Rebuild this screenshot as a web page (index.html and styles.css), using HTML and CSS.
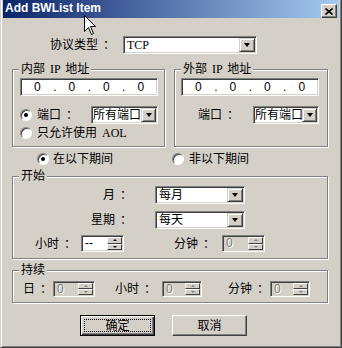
FILE: index.html
```html
<!DOCTYPE html>
<html lang="zh-CN">
<head>
    <meta charset="UTF-8">
    <meta name="viewport" content="width=device-width, initial-scale=1.0">
    <title>Add BWList Item</title>
    <link rel="stylesheet" href="styles.css">
</head>
<body>
<div class="window">
    <div class="titlebar">
        <span class="title">Add BWList Item</span>
        <span class="close">
            <svg width="8" height="7" viewBox="0 0 8 7"><path d="M0.5 0.5L7.5 6.5M7.5 0.5L0.5 6.5" stroke="#000" stroke-width="1.6"/></svg>
        </span>
    </div>

    <div class="content">
        <!-- protocol -->
        <div class="proto-row">
            <span class="proto-label">协议类型 ：</span>
            <div class="combo w-proto">
                <span class="combo-text">TCP</span>
                <span class="arrow-btn"><i class="tri"></i></span>
            </div>
        </div>

        <!-- inner / outer address -->
        <div class="groups">
            <div class="group group-in">
                <span class="caption">内部 IP 地址</span>
                <div class="ipbox">
                    <span class="octet">0</span><span class="dot">.</span>
                    <span class="octet">0</span><span class="dot">.</span>
                    <span class="octet">0</span><span class="dot">.</span>
                    <span class="octet">0</span>
                </div>
                <div class="port-row">
                    <label class="opt"><span class="radio checked"></span>端口 ：</label>
                    <div class="combo w-port">
                        <span class="combo-text tight">所有端口</span>
                        <span class="arrow-btn narrow"><i class="tri"></i></span>
                    </div>
                </div>
                <label class="opt aol-row"><span class="radio"></span>只允许使用 AOL</label>
            </div>

            <div class="group group-out">
                <span class="caption">外部 IP 地址</span>
                <div class="ipbox">
                    <span class="octet">0</span><span class="dot">.</span>
                    <span class="octet">0</span><span class="dot">.</span>
                    <span class="octet">0</span><span class="dot">.</span>
                    <span class="octet">0</span>
                </div>
                <div class="port-row">
                    <span class="port-label">端口 ：</span>
                    <div class="combo w-port2">
                        <span class="combo-text tight">所有端口</span>
                        <span class="arrow-btn narrow"><i class="tri"></i></span>
                    </div>
                </div>
            </div>
        </div>

        <!-- period -->
        <div class="period-row">
            <label class="opt period-opt"><span class="radio checked"></span>在以下期间</label>
            <label class="opt"><span class="radio"></span>非以下期间</label>
        </div>

        <!-- start -->
        <div class="group group-start">
            <span class="caption">开始</span>
            <div class="sel-row">
                <span class="sel-label">月 ：</span>
                <div class="combo w-sel">
                    <span class="combo-text">每月</span>
                    <span class="arrow-btn"><i class="tri"></i></span>
                </div>
            </div>
            <div class="sel-row second">
                <span class="sel-label">星期 ：</span>
                <div class="combo w-sel">
                    <span class="combo-text">每天</span>
                    <span class="arrow-btn"><i class="tri"></i></span>
                </div>
            </div>
            <div class="time-row">
                <span class="time-label">小时 ：</span>
                <div class="spin">
                    <span class="spin-text">--</span>
                    <span class="spin-btns"><span class="sb"><i class="up"></i></span><span class="sb"><i class="dn"></i></span></span>
                </div>
                <span class="time-label min-label">分钟 ：</span>
                <div class="spin disabled">
                    <span class="spin-text">0</span>
                    <span class="spin-btns"><span class="sb"><i class="up"></i></span><span class="sb"><i class="dn"></i></span></span>
                </div>
            </div>
        </div>

        <!-- duration -->
        <div class="group group-dur">
            <span class="caption">持续</span>
            <div class="dur-row">
                <span class="dur-label day">日 ：</span>
                <div class="spin disabled w-day">
                    <span class="spin-text">0</span>
                    <span class="spin-btns"><span class="sb"><i class="up"></i></span><span class="sb"><i class="dn"></i></span></span>
                </div>
                <span class="dur-label hour">小时 ：</span>
                <div class="spin disabled w-dur">
                    <span class="spin-text">0</span>
                    <span class="spin-btns"><span class="sb"><i class="up"></i></span><span class="sb"><i class="dn"></i></span></span>
                </div>
                <span class="dur-label minute">分钟 ：</span>
                <div class="spin disabled w-dur">
                    <span class="spin-text">0</span>
                    <span class="spin-btns"><span class="sb"><i class="up"></i></span><span class="sb"><i class="dn"></i></span></span>
                </div>
            </div>
        </div>

        <div class="buttons">
            <button class="btn default"><span class="focus">确定</span></button>
            <button class="btn"><span class="focus off">取消</span></button>
        </div>
    </div>

    <svg class="cursor" width="13" height="21" viewBox="0 0 13 21">
        <path d="M0.5 0.5V16.5L4.5 12.5L7.5 19.5L9.5 18.5L6.5 11.5H11.5Z" fill="#fff" stroke="#000" stroke-width="1"/>
    </svg>
</div>
</body>
</html>
```

FILE: styles.css
```css
body {
    margin: 0;
    background: #d4d0c8;
    font-family: "Liberation Serif", "Noto Sans CJK SC", serif;
    font-size: 12px;
    line-height: 14px;
    color: #000;
}
.window {
    position: relative;
    width: 342px;
    height: 348px;
    box-sizing: border-box;
    background: #d4d0c8;
    border: 1px solid;
    border-color: #d4d0c8 #404040 #404040 #d4d0c8;
    border-top: 0;
    padding: 0 2px 2px 2px;
    box-shadow: inset 1px 0 #fff, inset -1px -1px #808080;
}
.titlebar {
    height: 18px;
    display: flex;
    justify-content: space-between;
    align-items: flex-start;
    padding: 0 2px;
    background: linear-gradient(90deg, #0a246a, #a6caf0);
}
.title {
    font: bold 12px/17px "Liberation Sans", sans-serif;
    color: #fff;
}
.close {
    margin-top: 4px;
    width: 16px;
    height: 14px;
    box-sizing: border-box;
    display: flex;
    align-items: center;
    justify-content: center;
    background: #d4d0c8;
    border: 1px solid;
    border-color: #fff #404040 #404040 #fff;
    box-shadow: inset -1px -1px #808080;
}

/* generic controls */
.combo {
    height: 18px;
    box-sizing: border-box;
    display: flex;
    background: #fff;
    border: 1px solid;
    border-color: #808080 #fff #fff #808080;
    box-shadow: inset 1px 1px #404040, inset -1px -1px #d4d0c8;
    padding: 1px;
}
.combo-text {
    flex: 1;
    min-width: 0;
    padding-left: 2px;
    line-height: 14px;
    white-space: nowrap;
}
.combo-text.tight { padding-left: 0; }
.arrow-btn {
    width: 16px;
    flex: none;
    box-sizing: border-box;
    display: flex;
    align-items: center;
    justify-content: center;
    background: #d4d0c8;
    border: 1px solid;
    border-color: #d4d0c8 #404040 #404040 #d4d0c8;
    box-shadow: inset 1px 1px #fff, inset -1px -1px #808080;
}
.arrow-btn.narrow { width: 15px; }
.tri {
    width: 0;
    height: 0;
    border-left: 3.5px solid transparent;
    border-right: 3.5px solid transparent;
    border-top: 4px solid #000;
}
.radio {
    width: 12px;
    height: 12px;
    box-sizing: border-box;
    flex: none;
    position: relative;
    border-radius: 50%;
    background: #fff;
    border: 1px solid;
    border-color: #808080 #fff #fff #808080;
    box-shadow: inset 1px 1px #404040;
}
.radio.checked::after {
    content: "";
    position: absolute;
    left: 3px;
    top: 3px;
    width: 4px;
    height: 4px;
    border-radius: 50%;
    background: #000;
}
.opt {
    display: flex;
    align-items: center;
    gap: 5px;
    white-space: nowrap;
    word-spacing: 2px;
}
.group {
    position: relative;
    box-sizing: border-box;
    border: 1px solid #808080;
    box-shadow: inset 1px 1px #fff, 1px 1px #fff;
}
.caption {
    position: absolute;
    top: -8px;
    left: 6px;
    padding: 0 2px;
    background: #d4d0c8;
    white-space: nowrap;
    word-spacing: 2px;
}
.spin {
    width: 43px;
    height: 17px;
    box-sizing: border-box;
    display: flex;
    background: #fff;
    border: 1px solid;
    border-color: #808080 #fff #fff #808080;
    box-shadow: inset 1px 1px #404040, inset -1px -1px #d4d0c8;
    padding: 1px;
}
.spin.disabled {
    background: #d4d0c8;
    color: #808080;
}
.spin-text {
    flex: 1;
    padding-left: 2px;
    font-family: "Liberation Sans", sans-serif;
    line-height: 13px;
}
.spin.disabled .spin-text {
    text-shadow: 1px 1px #fff;
}
.spin-btns {
    width: 15px;
    display: flex;
    flex-direction: column;
}
.sb {
    flex: 1;
    box-sizing: border-box;
    display: flex;
    align-items: center;
    justify-content: center;
    background: #d4d0c8;
    border: 1px solid;
    border-color: #fff #404040 #404040 #fff;
}
.sb .up, .sb .dn {
    width: 0;
    height: 0;
    border-left: 2px solid transparent;
    border-right: 2px solid transparent;
}
.sb .up { border-bottom: 2px solid #000; }
.sb .dn { border-top: 2px solid #000; }
.spin.disabled .sb .up { border-bottom-color: #808080; }
.spin.disabled .sb .dn { border-top-color: #808080; }

/* protocol row */
.proto-row {
    display: flex;
    align-items: center;
    margin-top: 18px;
    padding-left: 47px;
    height: 18px;
}
.proto-label {
    width: 73px;
    word-spacing: 2px;
}
.w-proto { width: 134px; }

/* address groups */
.groups {
    display: flex;
    gap: 9px;
    margin: 15px 0 0 9px;
}
.group-in {
    width: 153px;
    height: 78px;
    padding: 8px 0 0 7px;
}
.group-out {
    width: 154px;
    height: 78px;
    padding: 8px 0 0 6px;
}
.ipbox {
    width: 138px;
    height: 18px;
    box-sizing: border-box;
    display: flex;
    background: #fff;
    border: 1px solid;
    border-color: #808080 #fff #fff #808080;
    box-shadow: inset 1px 1px #404040, inset -1px -1px #d4d0c8;
    padding: 1px;
    font-family: "Liberation Sans", sans-serif;
}
.octet {
    width: 31px;
    text-align: center;
}
.dot {
    width: 4px;
    text-align: right;
}
.port-row {
    width: 138px;
    height: 18px;
    margin-top: 10px;
    display: flex;
    align-items: center;
    justify-content: space-between;
}
.w-port { width: 67px; }
.w-port2 { width: 66px; }
.port-label {
    padding-left: 17px;
    word-spacing: 2px;
}
.aol-row {
    margin-top: 2px;
    height: 14px;
}

/* period */
.period-row {
    display: flex;
    margin-top: 5px;
    padding-left: 34px;
    height: 14px;
}
.period-opt {
    width: 135px;
    gap: 4px;
}

/* start group */
.group-start {
    width: 316px;
    height: 83px;
    margin: 10px 0 0 9px;
    padding-top: 9px;
}
.sel-row {
    display: flex;
    align-items: center;
    height: 18px;
}
.sel-row.second { margin-top: 7px; }
.sel-label {
    width: 119px;
    margin-right: 23px;
    text-align: right;
    word-spacing: 2px;
}
.w-sel { width: 90px; }
.time-row {
    display: flex;
    align-items: center;
    margin-top: 6px;
    padding-left: 22px;
}
.time-label {
    width: 46px;
    word-spacing: 2px;
}
.min-label {
    width: 48px;
    margin-left: 50px;
}

/* duration group */
.group-dur {
    width: 316px;
    height: 33px;
    margin: 11px 0 0 9px;
    padding: 10px 0 0 10px;
}
.dur-row {
    display: flex;
    align-items: center;
    height: 16px;
}
.dur-row .spin { height: 16px; }
.dur-label { word-spacing: 2px; }
.dur-label.day { width: 30px; }
.dur-label.hour { width: 47px; margin-left: 20px; }
.dur-label.minute { width: 42px; margin-left: 26px; }
.w-day { width: 42px; }
.w-dur { width: 40px; }

/* buttons */
.buttons {
    display: flex;
    gap: 17px;
    margin: 12px 0 0 77px;
}
.btn {
    width: 75px;
    height: 21px;
    box-sizing: border-box;
    display: flex;
    padding: 3px;
    background: #d4d0c8;
    border: 1px solid;
    border-color: #fff #404040 #404040 #fff;
    box-shadow: inset -1px -1px #808080;
    font: inherit;
    color: #000;
}
.btn.default {
    border: 1px solid #000;
    box-shadow: inset 1px 1px #fff, inset -1px -1px #404040, inset -2px -2px #808080;
}
.focus {
    flex: 1;
    display: flex;
    align-items: center;
    justify-content: center;
    border: 1px dotted #000;
}
.focus.off { border-color: transparent; }

.cursor {
    position: absolute;
    left: 83px;
    top: 15px;
}
```
